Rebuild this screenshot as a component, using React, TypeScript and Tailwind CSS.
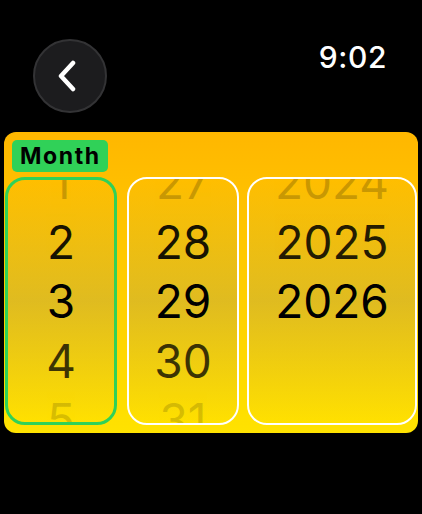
import React from 'react';

type Row = { v: string; o: string };

const months: Row[] = [
  { v: '1', o: 'opacity-20' },
  { v: '2', o: 'opacity-90' },
  { v: '3', o: 'opacity-100' },
  { v: '4', o: 'opacity-75' },
  { v: '5', o: 'opacity-15' },
];

const days: Row[] = [
  { v: '27', o: 'opacity-20' },
  { v: '28', o: 'opacity-90' },
  { v: '29', o: 'opacity-100' },
  { v: '30', o: 'opacity-75' },
  { v: '31', o: 'opacity-15' },
];

const years: Row[] = [
  { v: '2024', o: 'opacity-20' },
  { v: '2025', o: 'opacity-85' },
  { v: '2026', o: 'opacity-100' },
  { v: '', o: '' },
  { v: '', o: '' },
];

function Wheel({ rows, active, width }: { rows: Row[]; active?: boolean; width: string }) {
  return (
    <div
      className={`${width} h-[248px] rounded-[20px] ${active ? 'border-[3px] border-[#30D158]' : 'border-2 border-white'} bg-linear-to-b from-transparent via-[#808080]/25 to-transparent overflow-hidden flex flex-col items-center justify-center`}
    >
      {rows.map((r, i) => (
        <div key={i} className={`h-[59.5px] shrink-0 flex items-center justify-center text-[46px] leading-none text-black ${r.o}`}>
          {r.v}
        </div>
      ))}
    </div>
  );
}

export default function App() {
  return (
    <div className="w-[422px] h-[514px] bg-black overflow-hidden" style={{ fontFamily: 'Inter, "Noto Sans", sans-serif' }}>
      <div className="flex justify-between items-start pt-[39px] pl-[33px] pr-[35px]">
        <button className="w-[74px] h-[74px] rounded-full bg-[#1c1c1e] border-2 border-[#333335] flex items-center justify-center pr-[6px]">
          <svg width="20" height="32" viewBox="0 0 20 32" fill="none">
            <path d="M16 3 L4 16 L16 29" stroke="white" strokeWidth="4.5" strokeLinecap="round" strokeLinejoin="round" />
          </svg>
        </button>
        <div className="mt-[3px] text-white text-[30px] leading-none font-medium tracking-[0.02em]">9:02</div>
      </div>

      <div className="mt-[19px] mx-[4px] rounded-xl bg-linear-to-b from-[#FFB700] to-[#FFE200] px-px pt-2 pb-2">
        <div className="ml-[7px] inline-flex items-center h-[32px] pl-[8px] pr-[7px] rounded-[5px] bg-[#30D158] text-black text-[23px] font-bold tracking-[0.07em]">
          Month
        </div>
        <div className="mt-[5px] flex">
          <Wheel rows={months} active width="w-[112px]" />
          <div className="w-[10px] shrink-0" />
          <Wheel rows={days} width="w-[112px]" />
          <div className="w-[8px] shrink-0" />
          <Wheel rows={years} width="flex-1" />
        </div>
      </div>
    </div>
  );
}
